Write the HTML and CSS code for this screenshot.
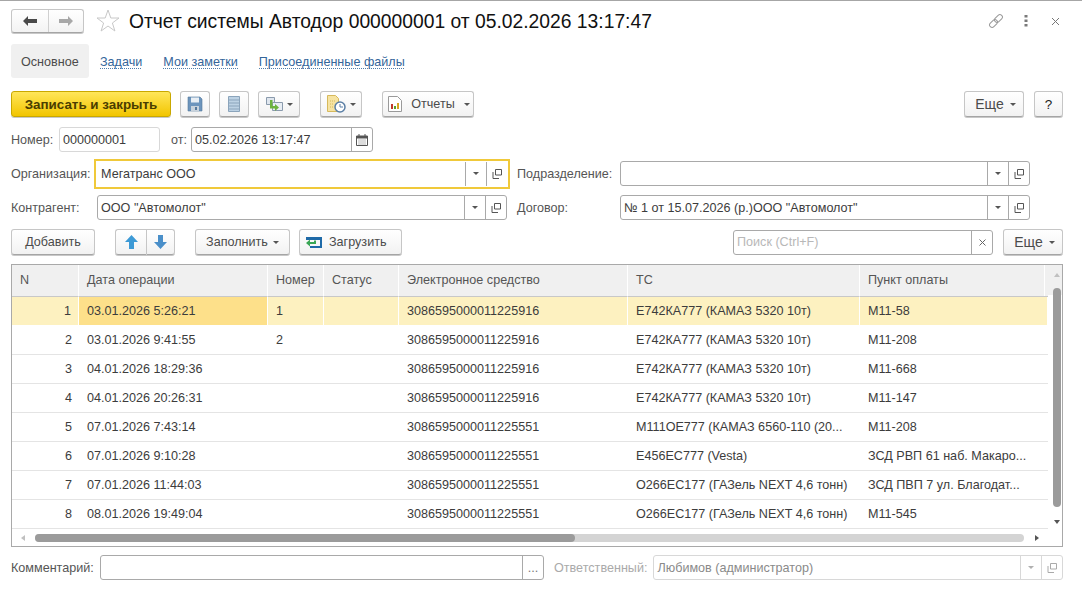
FILE: index.html
```html
<!DOCTYPE html>
<html lang="ru">
<head>
    <meta charset="UTF-8">
    <title>Отчет системы Автодор</title>
    <link rel="stylesheet" href="styles.css">
</head>
<body>
    <!-- Шапка -->
    <div class="title-row">
        <div class="nav-group">
            <button class="nav-btn back"><svg width="14" height="10" viewBox="0 0 14 10"><path d="M0 5l5-5v3h9v4H5v3z" fill="#4a4a4a"/></svg></button>
            <button class="nav-btn"><svg width="14" height="10" viewBox="0 0 14 10"><path d="M14 5L9 0v3H0v4h9v3z" fill="#a8a8a8"/></svg></button>
        </div>
        <svg class="star" width="24" height="23" viewBox="0 0 24 23"><path d="M12 1l2.800 8H23l-6.600 5 2.500 8L12 17l-6.900 5 2.500-8L1 9h8.200z" fill="#fff" stroke="#c8c8c8"/></svg>
        <h1 class="title">Отчет системы Автодор 000000001 от 05.02.2026 13:17:47</h1>
        <div class="window-tools">
            <svg width="16" height="16" viewBox="0 0 16 16"><g transform="rotate(-45 8 8)" fill="none" stroke="#9a9a9a"><rect x="0" y="5.500" width="9" height="5" rx="2.500"/><rect x="7" y="5.500" width="9" height="5" rx="2.500"/></g></svg>
            <svg width="4" height="12" viewBox="0 0 4 12"><path d="M0.500 0h3v2.500h-3zM0.500 4.500h3V7h-3zM0.500 9h3v2.500h-3z" fill="#7a7a7a"/></svg>
            <svg width="9" height="9" viewBox="0 0 9 9"><path d="M1 1l7 7M8 1L1 8" stroke="#777" fill="none"/></svg>
        </div>
    </div>

    <div class="tabs">
        <span class="tab active">Основное</span>
        <a class="tab link">Задачи</a>
        <a class="tab link">Мои заметки</a>
        <a class="tab link">Присоединенные файлы</a>
    </div>

    <!-- Командная панель -->
    <div class="toolbar">
        <button class="btn primary">Записать и закрыть</button>
        <button class="btn icon-btn ml-9"><svg width="16" height="16" viewBox="0 0 16 16"><path d="M1 1h12l2 2v12H1z" fill="#6d95bd" stroke="#56799c" stroke-width=".6"/><path d="M4 1.500h8v5H4z" fill="#e9eff5"/><path d="M4 10h8v5H4z" fill="#c9d3dc"/><path d="M8 11h2v3H8z" fill="#56799c"/></svg></button>
        <button class="btn icon-btn ml-9"><svg width="12" height="16" viewBox="0 0 12 16"><path d="M.5.500h11v15H.500z" fill="#bdd2e4" stroke="#8ba4bb"/><path d="M1 4h10M1 7h10M1 10h10M1 13h10" stroke="#8ba4bb"/></svg></button>
        <button class="btn drop-btn ml-9">
            <svg width="17" height="16" viewBox="0 0 17 16"><path d="M.5 1.500h8v7h-8z" fill="#dfe6ee" stroke="#8a9aac"/><path d="M6.500 6.500h10v8h-10z" fill="#e8eef4" stroke="#8a9aac"/><path d="M4 4h2.500v6H9V8l4 3.500L9 15v-2.500H4z" fill="#6cb33f"/></svg>
            <i class="caret"></i>
        </button>
        <button class="btn drop-btn ml-20">
            <svg width="20" height="18" viewBox="0 0 20 18"><path d="M1.500.5h8l3 3v13h-11z" fill="#f6e3a1" stroke="#d6b95c"/><path d="M4 6h5M4 9h3M4 12h3" stroke="#d6b95c" stroke-dasharray="1 1"/><circle cx="14" cy="12" r="5" fill="#fff" stroke="#5b7fa5" stroke-width="1.500"/><path d="M14 9v3h3" fill="none" stroke="#5b7fa5"/></svg>
            <i class="caret"></i>
        </button>
        <button class="btn report-btn ml-20">
            <svg width="14" height="16" viewBox="0 0 14 16"><path d="M.5.500h9l4 4v11H.500z" fill="#fff" stroke="#9a9a9a"/><path d="M3 8h2v5H3z" fill="#c0392b"/><path d="M6 10h2v3H6z" fill="#5aa02c"/><path d="M9 7h2v6H9z" fill="#d9a520"/></svg>
            <span>Отчеты</span>
            <i class="caret"></i>
        </button>
        <div class="spacer"></div>
        <button class="btn more">Еще <i class="caret"></i></button>
        <button class="btn help">?</button>
    </div>

    <!-- Реквизиты -->
    <div class="form-row number-row">
        <label class="lbl">Номер:</label>
        <div class="field number"><span class="val">000000001</span></div>
        <label class="lbl from">от:</label>
        <div class="field date">
            <span class="val">05.02.2026 13:17:47</span>
            <span class="fbtn"><svg width="12" height="12" viewBox="0 0 12 12"><path d="M.5 2h11v9.500H.500z" fill="#fff" stroke="#555"/><path d="M.5 2h11v2.500H.500z" fill="#555"/><path d="M3 0v3M9 0v3" stroke="#555"/><path d="M2.500 6h7M2.500 8h7M2.500 10h7" stroke="#777" stroke-dasharray="1 1"/></svg></span>
        </div>
    </div>

    <div class="form-grid">
        <label class="lbl">Организация:</label>
        <div class="field focused">
            <span class="val">Мегатранс ООО</span>
            <span class="fbtn"><i class="caret"></i></span>
            <span class="fbtn"><svg width="10" height="10" viewBox="0 0 10 10"><path d="M3.500.500h6v5.500h-6zM1 3v6.500h6" fill="none" stroke="#555"/></svg></span>
        </div>
        <label class="lbl">Подразделение:</label>
        <div class="field">
            <span class="val"></span>
            <span class="fbtn"><i class="caret"></i></span>
            <span class="fbtn"><svg width="10" height="10" viewBox="0 0 10 10"><path d="M3.500.500h6v5.500h-6zM1 3v6.500h6" fill="none" stroke="#555"/></svg></span>
        </div>
        <label class="lbl">Контрагент:</label>
        <div class="field">
            <span class="val">ООО "Автомолот"</span>
            <span class="fbtn"><i class="caret"></i></span>
            <span class="fbtn"><svg width="10" height="10" viewBox="0 0 10 10"><path d="M3.500.500h6v5.500h-6zM1 3v6.500h6" fill="none" stroke="#555"/></svg></span>
        </div>
        <label class="lbl">Договор:</label>
        <div class="field">
            <span class="val">№ 1 от 15.07.2026 (р.)ООО "Автомолот"</span>
            <span class="fbtn"><i class="caret"></i></span>
            <span class="fbtn"><svg width="10" height="10" viewBox="0 0 10 10"><path d="M3.500.500h6v5.500h-6zM1 3v6.500h6" fill="none" stroke="#555"/></svg></span>
        </div>
    </div>

    <!-- Панель таблицы -->
    <div class="toolbar table-bar">
        <button class="btn add">Добавить</button>
        <div class="updown">
            <button class="btn arrow"><svg width="13" height="14" viewBox="0 0 13 14"><path d="M6.500 0L13 7H9v7H4V7H0z" fill="#3d9ad6"/></svg></button>
            <button class="btn arrow"><svg width="13" height="14" viewBox="0 0 13 14"><path d="M6.500 14L13 7H9V0H4v7H0z" fill="#4a8fc9"/></svg></button>
        </div>
        <button class="btn fill">Заполнить <i class="caret"></i></button>
        <button class="btn load">
            <svg width="16" height="11" viewBox="0 0 16 11"><path d="M0 0h16v11H4V9h10V3H0z" fill="#1f6aa8"/><path d="M0 6l4-3.500V5h6v2H4v2.500z" fill="#3aa655"/><path d="M8 3.500h2V7H8z" fill="#3aa655"/></svg>
            <span>Загрузить</span>
        </button>
        <div class="spacer"></div>
        <div class="field search">
            <span class="val hint">Поиск (Ctrl+F)</span>
            <span class="fbtn"><svg width="7" height="7" viewBox="0 0 7 7"><path d="M.5.500l6 6M6.500.500l-6 6" stroke="#666" fill="none"/></svg></span>
        </div>
        <button class="btn more">Еще <i class="caret"></i></button>
    </div>

    <!-- Таблица -->
    <div class="grid-box">
        <div class="grid-main">
            <table class="grid">
                <colgroup>
                    <col class="c-n"><col class="c-date"><col class="c-num"><col class="c-status"><col class="c-card"><col class="c-ts"><col class="c-point">
                </colgroup>
                <thead>
                    <tr><th>N</th><th>Дата операции</th><th>Номер</th><th>Статус</th><th>Электронное средство</th><th>ТС</th><th>Пункт оплаты</th></tr>
                </thead>
                <tbody>
                    <tr class="current"><td class="n">1</td><td class="cell-active">03.01.2026 5:26:21</td><td>1</td><td></td><td>3086595000011225916</td><td>Е742КА777 (КАМАЗ 5320 10т)</td><td>М11-58</td></tr>
                    <tr><td class="n">2</td><td>03.01.2026 9:41:55</td><td>2</td><td></td><td>3086595000011225916</td><td>Е742КА777 (КАМАЗ 5320 10т)</td><td>М11-208</td></tr>
                    <tr><td class="n">3</td><td>04.01.2026 18:29:36</td><td></td><td></td><td>3086595000011225916</td><td>Е742КА777 (КАМАЗ 5320 10т)</td><td>М11-668</td></tr>
                    <tr><td class="n">4</td><td>04.01.2026 20:26:31</td><td></td><td></td><td>3086595000011225916</td><td>Е742КА777 (КАМАЗ 5320 10т)</td><td>М11-147</td></tr>
                    <tr><td class="n">5</td><td>07.01.2026 7:43:14</td><td></td><td></td><td>3086595000011225551</td><td>М111ОЕ777 (КАМАЗ 6560-110 (20...</td><td>М11-208</td></tr>
                    <tr><td class="n">6</td><td>07.01.2026 9:10:28</td><td></td><td></td><td>3086595000011225551</td><td>Е456ЕС777 (Vesta)</td><td>ЗСД РВП 61 наб. Макаро...</td></tr>
                    <tr><td class="n">7</td><td>07.01.2026 11:44:03</td><td></td><td></td><td>3086595000011225551</td><td>О266ЕС177 (ГАЗель NEXT 4,6 тонн)</td><td>ЗСД ПВП 7 ул. Благодат...</td></tr>
                    <tr><td class="n">8</td><td>08.01.2026 19:49:04</td><td></td><td></td><td>3086595000011225551</td><td>О266ЕС177 (ГАЗель NEXT 4,6 тонн)</td><td>М11-545</td></tr>
                </tbody>
            </table>
            <div class="vbar">
                <i class="tri up"></i>
                <div class="vtrack"><div class="vthumb"></div></div>
                <i class="tri down"></i>
            </div>
        </div>
        <div class="hbar">
            <i class="tri left"></i>
            <div class="htrack"><div class="hthumb"></div></div>
            <i class="tri right"></i>
        </div>
    </div>

    <!-- Низ формы -->
    <div class="form-row bottom-row">
        <label class="lbl">Комментарий:</label>
        <div class="field comment">
            <span class="val"></span>
            <span class="fbtn dots">...</span>
        </div>
        <label class="lbl muted">Ответственный:</label>
        <div class="field owner">
            <span class="val">Любимов (администратор)</span>
            <span class="fbtn"><i class="caret light"></i></span>
            <span class="fbtn"><svg width="10" height="10" viewBox="0 0 10 10"><path d="M3.500.500h6v5.500h-6zM1 3v6.500h6" fill="none" stroke="#aaa"/></svg></span>
        </div>
    </div>
</body>
</html>
```

FILE: styles.css
```css
* {
    box-sizing: border-box;
}

html, body {
    margin: 0;
    height: 592px;
    overflow: hidden;
}

body {
    background: #fff;
    border-top: 1px solid #a6a6a6;
    font-family: "Liberation Sans", Arial, sans-serif;
    font-size: 12.6px;
    color: #4b4b4b;
    padding: 0 19px 0 11px;
}

button {
    font: inherit;
    color: inherit;
}

/* шапка */
.title-row {
    display: flex;
    align-items: flex-start;
    height: 35px;
    margin-top: 8px;
}

.nav-group {
    display: flex;
    width: 73px;
    height: 24px;
    border: 1px solid #c6c6c6;
    border-bottom-color: #a5a5a5;
    border-radius: 3px;
    box-shadow: 0 1px 0 #c8c8c8;
    background: linear-gradient(#fff, #f3f3f3);
}

.nav-btn {
    flex: 1;
    padding: 0;
    border: 0;
    background: none;
    display: flex;
    align-items: center;
    justify-content: center;
}

.nav-btn.back {
    flex: none;
    width: 36px;
}

.nav-btn + .nav-btn {
    border-left: 1px solid #d0d0d0;
}

.star {
    margin-left: 12px;
    flex: none;
}

.title {
    margin: 0 0 0 9px;
    font-size: 19.3px;
    line-height: 25px;
    font-weight: normal;
    color: #111;
    white-space: nowrap;
}

.window-tools {
    margin-left: auto;
    margin-right: 3px;
    height: 24px;
    display: flex;
    align-items: center;
    gap: 20px;
}

.window-tools svg:last-child {
    margin-left: 3px;
}

.tabs {
    display: flex;
    height: 34px;
}

.tab {
    display: flex;
    align-items: center;
    padding: 2px 10px 0;
}

.tab.active {
    background: #f0f0f0;
    border-radius: 3px;
    width: 78px;
    white-space: nowrap;
}

.tab.link {
    color: #34659a;
    padding: 2px 0 0;
    margin-left: 11px;
    margin-right: 10px;
    background: linear-gradient(90deg, #4f7eab 50%, transparent 50%) 0 24px / 2px 1px repeat-x;
}

/* кнопки */
.toolbar {
    display: flex;
    align-items: center;
    height: 26px;
    margin-top: 13px;
}

.btn {
    height: 26px;
    padding: 0;
    display: flex;
    align-items: center;
    justify-content: center;
    border: 1px solid #c6c6c6;
    border-bottom-color: #a5a5a5;
    border-radius: 3px;
    background: linear-gradient(#fff, #f2f2f2);
    box-shadow: 0 1px 0 #c8c8c8;
    flex: none;
}

.btn.primary {
    width: 160px;
    font-weight: bold;
    font-size: 13.4px;
    color: #4a3d00;
    background: linear-gradient(#ffe65a, #f2c500);
    border-color: #c9a800;
}

.icon-btn { width: 30px; }
.drop-btn { width: 42px; gap: 4px; }
.report-btn { width: 92px; gap: 9px; padding-left: 2px; }
.ml-9 { margin-left: 9px; }
.ml-20 { margin-left: 20px; }

.caret {
    display: inline-block;
    width: 0;
    height: 0;
    border-left: 3px solid transparent;
    border-right: 3px solid transparent;
    border-top: 3px solid #555;
    flex: none;
}

.caret.light { border-top-color: #b0b0b0; }

.spacer { flex: 1; }

.more {
    width: 60px;
    gap: 6px;
    padding-left: 3px;
    font-size: 14px;
}

.help {
    width: 29px;
    margin-left: 10px;
    font-size: 13.5px;
    color: #222;
}

/* поля */
.lbl {
    white-space: nowrap;
    color: #555;
    flex: none;
}

.form-row {
    display: flex;
    align-items: center;
}

.number-row {
    height: 25px;
    margin-top: 10px;
}

.number-row .lbl:first-child { width: 48px; }

.number-row .from {
    width: 20px;
    margin-left: 11px;
}

.field {
    display: flex;
    align-items: stretch;
    height: 25px;
    border: 1px solid #a9a9a9;
    border-radius: 3px;
    background: #fff;
    min-width: 0;
}

.val {
    flex: 1;
    display: flex;
    align-items: center;
    padding-left: 3px;
    color: #3c3c3c;
    white-space: nowrap;
    overflow: hidden;
}

.fbtn {
    width: 21px;
    border-left: 1px solid #a9a9a9;
    display: flex;
    align-items: center;
    justify-content: center;
    flex: none;
}

.number {
    width: 101px;
    border-color: #d8d8d8;
}

.date { width: 182px; }

.form-grid {
    display: grid;
    grid-template-columns: 86px 410px 113px 410px;
    grid-auto-rows: 25px;
    row-gap: 9px;
    align-items: center;
    margin-top: 9px;
}

.form-grid > .lbl:nth-child(3),
.form-grid > .lbl:nth-child(7) {
    margin-left: 10px;
}

.field.focused {
    height: 30px;
    margin: -3px;
    border: 2px solid #f0c93a;
    border-radius: 0;
    padding: 0 1px 0 2px;
}

.focused .fbtn,
.focused .val {
    margin: 1px 0;
}

/* панель таблицы */
.table-bar {
    margin-top: 9px;
}

.add { width: 84px; }

.updown {
    display: flex;
    margin-left: 20px;
}

.arrow { width: 31px; }

.arrow:first-child {
    border-radius: 3px 0 0 3px;
    border-right: 0;
}

.arrow:last-child {
    width: 29px;
    border-radius: 0 3px 3px 0;
}

.fill {
    width: 95px;
    margin-left: 20px;
    gap: 5px;
}

.load {
    width: 103px;
    margin-left: 9px;
    gap: 7px;
    padding-left: 6px;
    justify-content: flex-start;
}

.search { width: 260px; }

.hint { color: #b8b8b8; }

.table-bar .more { margin-left: 10px; }

/* таблица */
.grid-box {
    margin-top: 9px;
    width: 1052px;
    height: 283px;
    border: 1px solid #a9a9a9;
    display: flex;
    flex-direction: column;
}

.grid-main {
    display: flex;
    height: 264px;
    flex: none;
}

.grid {
    table-layout: fixed;
    border-collapse: separate;
    border-spacing: 0;
    width: 1036px;
    flex: none;
    align-self: flex-start;
}

.c-n { width: 67px; }
.c-date { width: 189px; }
.c-num { width: 56px; }
.c-status { width: 75px; }
.c-card { width: 229px; }
.c-ts { width: 232px; }
.c-point { width: 188px; }

.grid th {
    height: 32px;
    padding: 0 8px 2px;
    text-align: left;
    font-weight: normal;
    color: #555;
    background: #f0f0f0;
    border-right: 1px solid #fff;
    border-bottom: 1px solid #c8c8c8;
    white-space: nowrap;
    overflow: hidden;
}

.grid th:last-child {
    border-right: 0;
    background: linear-gradient(90deg, #f0f0f0 184px, #fff 184px, #fff 185px, #f0f0f0 185px);
}

.grid td {
    height: 29px;
    padding: 0 8px;
    border-bottom: 1px solid #e4e4e4;
    white-space: nowrap;
    overflow: hidden;
    color: #3c3c3c;
}

.grid td.n {
    text-align: right;
    padding-right: 7px;
}

.current td {
    background: #fdf1c0;
    border-right: 1px solid #fff;
    border-bottom-color: #fff;
}

.current td.cell-active {
    background: #fde08a;
}

.vbar {
    flex: 1;
    display: flex;
    flex-direction: column;
    align-items: center;
    padding-left: 3px;
    background: linear-gradient(#f0f0f0, #f0f0f0) 0 0 / 100% 30px no-repeat;
}

.vtrack {
    flex: 1;
    width: 8px;
    margin: 8px 0 6px;
    padding-top: 3px;
}

.vthumb {
    height: 219px;
    border-radius: 4px;
    background: #9b9b9b;
}

.tri {
    width: 0;
    height: 0;
    flex: none;
    display: block;
    border: 3px solid transparent;
}

.tri.up { border-top: 0; border-bottom: 4px solid #c0c0c0; margin-top: 8px; }
.tri.down { border-bottom: 0; border-top: 4px solid #555; margin-bottom: 5px; }
.tri.left { border-left: 0; border-right: 4px solid #c0c0c0; }
.tri.right { border-right: 0; border-left: 4px solid #555; }

.hbar {
    flex: 1;
    display: flex;
    align-items: center;
    padding: 0 23px 0 9px;
}

.htrack {
    flex: 1;
    height: 8px;
    margin: 0 11px 0 10px;
    border-radius: 4px;
    background: #d4d4d4;
}

.hthumb {
    width: 540px;
    height: 8px;
    border-radius: 4px;
    background: #9b9b9b;
}

/* низ */
.bottom-row {
    margin-top: 8px;
}

.bottom-row > .lbl:first-child { width: 89px; }

.comment { width: 444px; }

.dots { color: #777; }

.muted {
    color: #aaa;
    margin-left: 10px;
    margin-right: 6px;
}

.owner {
    flex: 1;
    border-color: #d8d8d8;
}

.owner .val { color: #8a8a8a; }
.owner .fbtn { border-left-color: #d8d8d8; }
```
